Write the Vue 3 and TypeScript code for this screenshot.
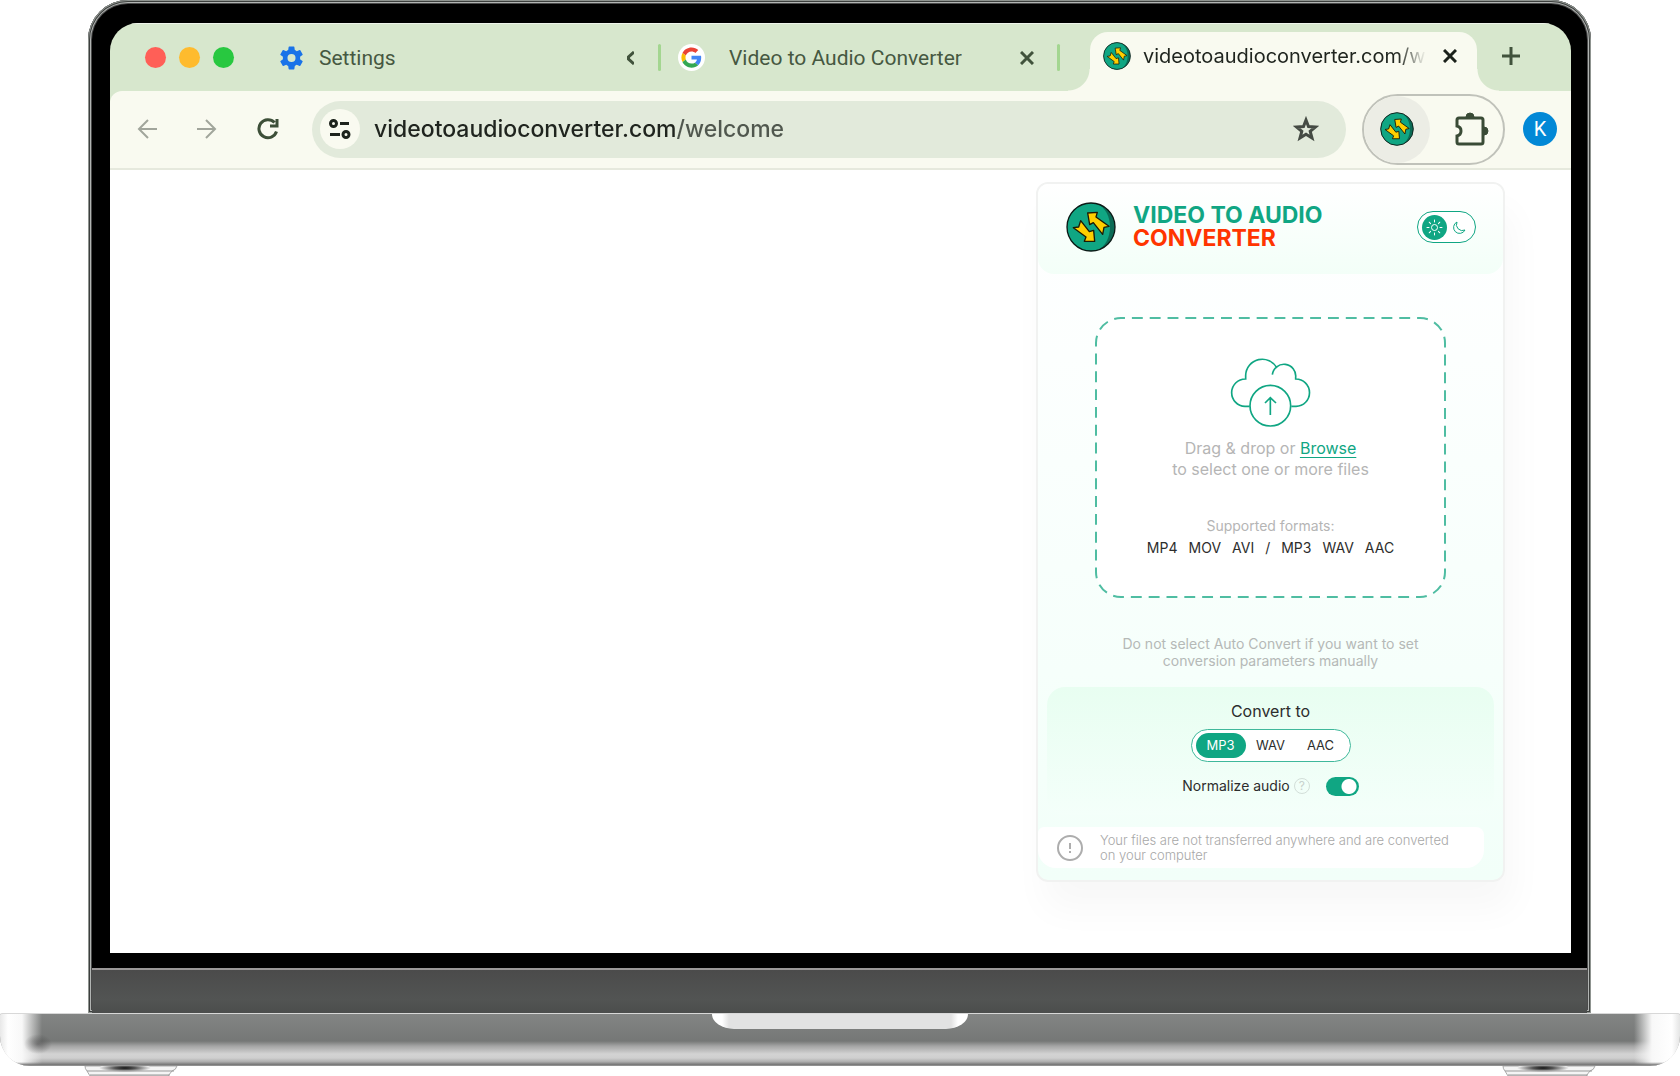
<script setup lang="ts">
import { ref } from 'vue'

type Format = 'MP3' | 'WAV' | 'AAC'

const address = ref('videotoaudioconverter.com/welcome')
const outputs: Format[] = ['MP3', 'WAV', 'AAC']
const output = ref<Format>('MP3')
const normalize = ref(true)
const dark = ref(false)
const supported = ['MP4', 'MOV', 'AVI', '/', 'MP3', 'WAV', 'AAC']
const rays = [0, 45, 90, 135, 180, 225, 270, 315]
</script>

<template>
  <svg class="defs" aria-hidden="true">
    <symbol id="brand" viewBox="5 5 150 150">
      <circle cx="80" cy="80" r="72" fill="#0b6b55" />
      <path d="M98 10A72 72 0 1 0 98 150C150 128 150 32 98 10Z" fill="#10a683" />
      <circle cx="80" cy="80" r="72" fill="none" stroke="#0c1a16" stroke-width="4" />
      <g fill="#ffcf00" stroke="#1c1a05" stroke-width="4" stroke-linejoin="round">
        <path d="M70 38L99 36L95 50L134 78L119 81L115 102L87 67L76 73Z" />
        <path d="M49 61L75 94L88 90L91 123L60 123L65 110L27 82L43 80Z" />
      </g>
    </symbol>
    <radialGradient id="foot" cx=".5" cy=".5" r=".5">
      <stop offset="0" stop-color="#111" />
      <stop offset=".4" stop-color="#555" />
      <stop offset="1" stop-color="#f4f4f4" />
    </radialGradient>
  </svg>

  <main class="laptop">
    <div class="lid">
      <div class="screen">
        <header class="tabs">
          <div class="lights"><i class="red"></i><i class="amber"></i><i class="green"></i></div>
          <div class="tab first">
            <svg width="23" height="24" viewBox="2 2 20 20" fill="#1a73e8"><path d="M19.43 12.98c.04-.32.07-.64.07-.98s-.03-.66-.07-.98l2.11-1.65c.19-.15.24-.42.12-.64l-2-3.46c-.12-.22-.39-.3-.61-.22l-2.49 1c-.52-.4-1.08-.73-1.69-.98l-.38-2.65C14.46 2.18 14.25 2 14 2h-4c-.25 0-.46.18-.49.42l-.38 2.65c-.61.25-1.17.59-1.69.98l-2.49-1c-.23-.09-.49 0-.61.22l-2 3.46c-.13.22-.07.49.12.64l2.11 1.65c-.04.32-.07.65-.07.98s.03.66.07.98l-2.11 1.65c-.19.15-.24.42-.12.64l2 3.46c.12.22.39.3.61.22l2.49-1c.52.4 1.08.73 1.69.98l.38 2.65c.03.24.24.42.49.42h4c.25 0 .46-.18.49-.42l.38-2.65c.61-.25 1.17-.59 1.69-.98l2.49 1c.23.09.49 0 .61-.22l2-3.46c.12-.22.07-.49-.12-.64zM12 15.5A3.5 3.5 0 1 1 12 8.500a3.500 3.500 0 0 1 0 7z" /></svg>
            <span>Settings</span>
            <button class="close" aria-label="Close Settings">
              <svg width="7" height="14" viewBox="0 0 7 14" fill="none" stroke="#41533c" stroke-width="3"><path d="M7 1L1.500 6V8L7 13" /></svg>
            </button>
          </div>
          <i class="divider"></i>
          <div class="tab second">
            <svg width="27" height="27" viewBox="-8 -8 64 64"><circle cx="24" cy="24" r="32" fill="#fff" /><path fill="#ea4335" d="M24 9.500c3.540 0 6.710 1.220 9.210 3.600l6.850-6.850C35.900 2.380 30.470 0 24 0 14.620 0 6.510 5.380 2.560 13.220l7.980 6.190C12.430 13.720 17.740 9.500 24 9.500z" /><path fill="#4285f4" d="M46.980 24.550c0-1.570-.15-3.090-.38-4.550H24v9.020h12.940c-.58 2.960-2.260 5.480-4.780 7.180l7.730 6c4.510-4.180 7.090-10.360 7.090-17.650z" /><path fill="#fbbc05" d="M10.530 28.590c-.48-1.450-.76-2.990-.76-4.590s.27-3.140.76-4.590l-7.980-6.190C.92 16.460 0 20.120 0 24c0 3.880.92 7.540 2.560 10.780l7.970-6.190z" /><path fill="#34a853" d="M24 48c6.480 0 11.930-2.130 15.890-5.810l-7.730-6c-2.150 1.450-4.920 2.300-8.160 2.300-6.260 0-11.570-4.220-13.470-9.910l-7.980 6.190C6.510 42.620 14.620 48 24 48z" /></svg>
            <span>Video to Audio Converter</span>
            <button class="close" aria-label="Close Video to Audio Converter">
              <svg width="14" height="14" viewBox="0 0 14 14" stroke="#41533c" stroke-width="3"><path d="M1 1L13 13M13 1L1 13" /></svg>
            </button>
          </div>
          <i class="divider"></i>
          <div class="tab active">
            <svg width="28" height="28"><use href="#brand" /></svg>
            <span>videotoaudioconverter.com/w</span>
            <button class="close" aria-label="Close current tab">
              <svg width="14" height="14" viewBox="0 0 14 14" stroke="#1b211a" stroke-width="3"><path d="M1 1L13 13M13 1L1 13" /></svg>
            </button>
          </div>
          <button class="new" aria-label="New tab">
            <svg width="18" height="18" viewBox="0 0 18 18" stroke="#41533c" stroke-width="3"><path d="M9 0V18M0 9H18" /></svg>
          </button>
        </header>

        <div class="chrome">
          <nav class="toolbar">
            <button aria-label="Back"><svg width="20" height="20" viewBox="0 0 20 20" fill="none" stroke="#a1a59b" stroke-width="2"><path d="M20 10H2M11 1L2 10L11 19" /></svg></button>
            <button aria-label="Forward"><svg width="20" height="20" viewBox="0 0 20 20" fill="none" stroke="#a1a59b" stroke-width="2"><path d="M0 10H18M9 1L18 10L9 19" /></svg></button>
            <button aria-label="Reload"><svg width="22" height="22" viewBox="0 0 22 22" fill="none" stroke="#3d4f38" stroke-width="3"><path d="M17.500 4.500A9 9 0 1 0 19.500 13.500M13 8H20V1" /></svg></button>
            <div class="omnibox">
              <button class="site" aria-label="Site information">
                <svg width="22" height="20" viewBox="0 0 22 20" fill="none" stroke="#1d231c" stroke-width="3"><circle cx="4.500" cy="4.500" r="3" /><circle cx="17" cy="15.500" r="3" /><path d="M11 4.500H20M1 15.500H11" /></svg>
              </button>
              <input v-model="address" type="text" aria-label="Address" spellcheck="false" />
              <button aria-label="Bookmark"><svg width="26" height="26" viewBox="0 0 26 26" fill="none" stroke="#454b44" stroke-width="3"><path d="M13 4L15.500 10.500L22.500 11L17.200 15.300L19 22L13 18.200L7 22L8.800 15.300L3.500 11L10.500 10.500Z" /></svg></button>
            </div>
            <div class="extensions">
              <button class="ext" aria-label="Video to Audio Converter"><svg width="34" height="34"><use href="#brand" /></svg></button>
              <button class="puzzle" aria-label="Extensions">
                <svg width="34" height="35" viewBox="0 0 34 35"><path d="M4 6H26Q28 6 28 8V30Q28 32 26 32H4Q2 32 2 30V24Q6 23 6 19Q6 15 2 14V8Q2 6 4 6Z" fill="none" stroke="#3a4b36" stroke-width="3" /><path d="M11 5A4 4 0 0 1 19 5ZM29 15A4 4 0 0 1 29 23Z" fill="#3a4b36" stroke="#3a4b36" /></svg>
              </button>
            </div>
            <button class="avatar" aria-label="Profile">K</button>
          </nav>
        </div>

        <section class="page">
          <article class="panel">
            <header class="head">
              <svg class="mark" width="50" height="50"><use href="#brand" /></svg>
              <h1>VIDEO TO AUDIO<br /><em>CONVERTER</em></h1>
              <button class="theme" role="switch" aria-label="Dark theme" :aria-checked="dark" @click="dark = !dark">
                <span class="sun">
                  <svg width="17" height="17" viewBox="0 0 17 17" fill="none" stroke="#fff"><circle cx="8.500" cy="8.500" r="3" /><path v-for="r in rays" :key="r" d="M8.500 3V1" :transform="`rotate(${r} 8.500 8.500)`" stroke-linecap="round" /></svg>
                </span>
                <svg width="13" height="13" viewBox="0 0 13 13" fill="none" stroke="#10a683"><path d="M4 1A6 6 0 1 0 12 9A6 6 0 0 1 4 1Z" stroke-linejoin="round" /></svg>
              </button>
            </header>

            <section class="drop">
              <svg class="outline" aria-hidden="true"><rect width="100%" height="100%" rx="25" pathLength="1224" /></svg>
              <svg width="81" height="71" viewBox="450 171 243 213" fill="none" stroke="#10a683" stroke-width="5">
                <path d="M509 319H495A41 41 0 0 1 497 237V226A50 50 0 0 1 591 204M577 224A35 35 0 0 1 647 232V237A41 41 0 0 1 648 319H634" />
                <circle cx="571" cy="317" r="61" />
                <path d="M571 345V294M555 309L571 293L588 309" />
              </svg>
              <p class="hint">Drag &amp; drop or <a href="#browse">Browse</a><br />to select one or more files</p>
              <p class="label">Supported formats:</p>
              <ul><li v-for="f in supported" :key="f">{{ f }}</li></ul>
            </section>

            <p class="note">Do not select Auto Convert if you want to set<br />conversion parameters manually</p>

            <section class="convert">
              <h2>Convert to</h2>
              <div class="formats" role="radiogroup" aria-label="Output format">
                <label v-for="f in outputs" :key="f" :class="{ on: f === output }">
                  <input v-model="output" type="radio" name="output" :value="f" />{{ f }}
                </label>
              </div>
              <div class="normalize">
                <label for="normalize">Normalize audio</label>
                <button class="help" aria-label="About normalizing">?</button>
                <input id="normalize" v-model="normalize" type="checkbox" />
              </div>
            </section>

            <footer class="notice">
              <svg width="26" height="26" viewBox="0 0 26 26" fill="none" stroke="#adadad" stroke-width="2"><circle cx="13" cy="13" r="12" /><path d="M13 8V14M13 16V18" /></svg>
              <p>Your files are not transferred anywhere and are converted<br />on your computer</p>
            </footer>
          </article>
        </section>
      </div>
      <div class="hinge"></div>
    </div>
    <div class="base"><div class="notch"></div></div>
    <div class="feet">
      <svg v-for="n in 2" :key="n" width="94" height="10" viewBox="0 0 94 10">
        <path d="M1 0H93Q92 4 88 5L84 10H6L3 5Q1 3 1 0Z" fill="#f4f4f4" stroke="#aaa" />
        <ellipse cx="41" cy="2" rx="26" ry="4" fill="url(#foot)" />
        <path d="M3 5H90M6 9H86" stroke="#999" fill="none" />
      </svg>
    </div>
  </main>
</template>

<style>
body {
  margin: 0;
  background: #fff;
}
</style>

<style scoped>
* {
  box-sizing: border-box;
}
button {
  display: flex;
  align-items: center;
  justify-content: center;
  padding: 0;
  border: 0;
  background: none;
  font: inherit;
  color: inherit;
  cursor: pointer;
}
svg {
  flex: none;
  display: block;
}
h1, h2, p, ul {
  margin: 0;
  padding: 0;
}
.defs {
  position: absolute;
  width: 0;
  height: 0;
}
.laptop {
  font-family: Inter, "Liberation Sans", sans-serif;
  overflow: hidden;
}

/* Lid and display */
.lid {
  margin: 0 89px 0 88px;
  padding: 4px;
  padding-bottom: 0;
  border-radius: 40px 40px 0 0;
  background: #000;
  box-shadow: inset 0 0 0 1px #8f9490, inset 0 0 0 2px #3c3f3d, inset 0 0 0 3px #b2b5b3, inset 0 0 0 4px #4a4a4a;
}
.screen {
  margin: 19px 16px 0 18px;
  border-radius: 28px 28px 0 0;
  overflow: hidden;
  background: #d7e7cd;
}
.hinge {
  height: 60px;
  border-top: 15px solid #000;
  background: linear-gradient(#9a9797 2px, #4b4b4b 2px, #525453 70%, #4b4d4c);
}

/* Tab strip */
.tabs {
  display: flex;
  align-items: center;
  height: 68px;
  border-top: 1px solid #eef4ea;
  font-family: Roboto, sans-serif;
  font-size: 21px;
  color: #465841;
}
.lights {
  display: flex;
  gap: 13px;
  padding-left: 35px;
}
.lights i {
  width: 21px;
  height: 21px;
  border-radius: 50%;
}
.red { background: #ff5f57; }
.amber { background: #febb2e; }
.green { background: #28c840; }
.tab {
  display: flex;
  align-items: center;
  min-width: 0;
}
.tab span {
  white-space: nowrap;
  overflow: hidden;
}
.close {
  margin-left: auto;
}
.first {
  flex: 1 1 424px;
  gap: 16px;
  padding: 0 24px 0 46px;
}
.second {
  flex: 1 1 396px;
  gap: 24px;
  padding: 0 23px 0 17px;
}
.divider {
  width: 3px;
  height: 27px;
  border-radius: 2px;
  background: #a3d690;
}
.active {
  position: relative;
  flex: 1 1 387px;
  align-self: flex-end;
  height: 59px;
  margin-left: 30px;
  padding: 0 20px 12px 13px;
  gap: 12px;
  border-radius: 18px 18px 0 0;
  background: #f9faf0;
  font-family: Inter, sans-serif;
  font-size: 20px;
  color: #1f241e;
}
.tab.active span {
  overflow: visible;
  mask-image: linear-gradient(90deg, #000 calc(100% - 28px), transparent);
}
.active::before,
.active::after {
  content: "";
  position: absolute;
  bottom: 0;
  width: 22px;
  height: 22px;
}
.active::before {
  right: 100%;
  background: radial-gradient(circle at 0 0, transparent 21px, #f9faf0 22px);
}
.active::after {
  left: 100%;
  background: radial-gradient(circle at 100% 0, transparent 21px, #f9faf0 22px);
}
.new {
  width: 94px;
  padding: 0 26px 4px 0;
}

/* Toolbar */
.toolbar {
  display: flex;
  align-items: center;
  height: 79px;
  padding: 0 14px 1px 27px;
  gap: 40px;
  border-bottom: 2px solid #e6e9dd;
  border-radius: 12px 0 0 0;
  background: #f9faf0;
}
.omnibox {
  display: flex;
  flex: 1;
  align-items: center;
  min-width: 0;
  height: 57px;
  margin-left: -7px;
  padding: 0 27px 0 8px;
  border-radius: 29px;
  background: #e2eadb;
}
.site {
  flex: none;
  width: 40px;
  height: 40px;
  border-radius: 50%;
  background: #f9faf0;
}
.omnibox input {
  flex: 1;
  min-width: 0;
  margin-left: 14px;
  padding: 0;
  border: 0;
  outline: 0;
  font: 500 23px/32px Inter, sans-serif;
  color: #1f241e;
  background: linear-gradient(90deg, #1f241e 303px, #50574e 303px);
  background-clip: text;
  -webkit-text-fill-color: transparent;
}
.extensions {
  display: flex;
  align-items: center;
  justify-content: space-between;
  width: 143px;
  height: 71px;
  margin-left: -24px;
  padding-right: 14px;
  border: 2px solid #c0c2ba;
  border-radius: 36px;
  overflow: hidden;
}
.ext {
  width: 66px;
  height: 67px;
  border-radius: 50%;
  background: #ecede5;
}
.avatar {
  width: 34px;
  height: 34px;
  margin-left: -22px;
  border-radius: 50%;
  background: #0288d6;
  font-family: Roboto, sans-serif;
  font-size: 20px;
  color: #fff;
}

/* Page and extension popup */
.page {
  display: flex;
  justify-content: flex-end;
  align-items: flex-start;
  min-height: 783px;
  padding: 12px 66px 0 0;
  background: #fff;
}
.panel {
  width: 469px;
  padding-bottom: 12px;
  border: 2px solid #f1f2f1;
  border-radius: 12px;
  background: linear-gradient(#fff, #fcfffe 25%, #f2fff9);
  box-shadow: 8px 28px 36px rgba(0, 0, 0, 0.03);
  overflow: clip;
}
.head {
  display: flex;
  align-items: center;
  height: 90px;
  padding: 0 27px 4px 28px;
  border-radius: 0 0 16px 16px;
  background: linear-gradient(#fff, #f3fff8);
}
h1 {
  margin-left: 17px;
  font-size: 23px;
  line-height: 23px;
  color: #10a683;
}
h1 em {
  font-style: normal;
  color: #ff3500;
}
.theme {
  width: 59px;
  height: 32px;
  margin-left: auto;
  padding: 0 9px 0 4px;
  justify-content: space-between;
  border: 1px solid #10a683;
  border-radius: 16px;
  background: #fff;
}
.sun {
  display: grid;
  place-items: center;
  width: 25px;
  height: 25px;
  border-radius: 50%;
  background: #10a683;
}
.drop {
  position: relative;
  display: flex;
  flex-direction: column;
  align-items: center;
  height: 279px;
  margin: 44px 58px 0;
  padding-top: 39px;
  border-radius: 25px;
  background: #fff;
  text-align: center;
}
.outline {
  position: absolute;
  inset: 0;
  width: 100%;
  height: 100%;
  overflow: visible;
}
.outline rect {
  fill: none;
  stroke: #4fbda2;
  stroke-width: 2;
  stroke-dasharray: 11 7;
  stroke-dashoffset: 7;
}
.hint {
  position: relative;
  margin-top: 10px;
  font-size: 16px;
  line-height: 21px;
  color: #b5b5b5;
}
.hint a {
  color: #10a683;
  text-underline-offset: 3px;
}
.label {
  margin-top: 35px;
  font-size: 14px;
  line-height: 21px;
  color: #b5b5b5;
}
ul {
  display: flex;
  gap: 11px;
  list-style: none;
  font-size: 14px;
  line-height: 23px;
  color: #2d2d2d;
}
.note {
  margin-top: 38px;
  font-size: 14px;
  line-height: 17px;
  text-align: center;
  color: #b5b9b7;
}
.convert {
  display: flex;
  flex-direction: column;
  align-items: center;
  height: 128px;
  margin: 18px 9px 0;
  padding-top: 14px;
  border-radius: 18px;
  background: linear-gradient(#e8fef1, #f4fffa);
  color: #2d2d2d;
}
h2 {
  font-size: 16px;
  line-height: 20px;
  font-weight: 400;
}
.formats {
  display: flex;
  height: 33px;
  margin-top: 8px;
  padding: 3px 4px;
  border: 1px solid #3fb89b;
  border-radius: 17px;
  background: #fff;
}
.formats label {
  width: 50px;
  border-radius: 13px;
  font-size: 13px;
  line-height: 25px;
  text-align: center;
}
.formats .on {
  background: #10a683;
  color: #fff;
}
.formats input {
  position: absolute;
  opacity: 0;
  margin: 0;
}
.normalize {
  display: flex;
  align-items: center;
  margin-top: 14px;
  font-size: 14px;
  line-height: 20px;
}
.help {
  width: 16px;
  height: 16px;
  margin: 0 16px 0 4px;
  border: 1px solid #d3dfd9;
  border-radius: 50%;
  font-size: 12px;
  line-height: 14px;
  color: #c8d2cd;
}
.normalize input {
  appearance: none;
  width: 33px;
  height: 19px;
  margin: 0;
  border-radius: 10px;
  background: radial-gradient(circle at 23px 50%, #fff 7px, #10a683 8px);
}
.notice {
  display: flex;
  align-items: center;
  height: 41px;
  margin: 12px 19px 0 0;
  padding-left: 19px;
  gap: 17px;
  border-radius: 6px 8px 18px 18px;
  background: #fff;
  font-size: 13px;
  font-weight: 300;
  line-height: 15px;
  color: #a8a8a8;
}

/* Laptop base */
.base {
  display: flex;
  justify-content: center;
  height: 53px;
  border-radius: 2px 2px 30px 30px;
  border-top: 1px solid #d8d8d8;
  background:
    radial-gradient(ellipse 14px 10px at 38px 30px, rgba(60, 60, 60, 0.5), transparent),
    linear-gradient(transparent 48px, #777 51px, #aaa),
    linear-gradient(90deg, #e8e8e8, #fff 8px, #f8f8f8 22px, transparent 42px, transparent calc(100% - 46px), #f8f8f8 calc(100% - 28px), #fff calc(100% - 8px), #e4e4e4),
    linear-gradient(#838584, #757776 27px, #a4a4a4 32px, #d3d3d3 40px, #cfcfcf 44px, #999 50px, #666);
}
.notch {
  width: 256px;
  height: 15px;
  border-radius: 0 0 22px 22px / 0 0 15px 15px;
  background: linear-gradient(90deg, #fff 10px, #e2e2e2 17px, #e2e2e2 calc(100% - 17px), #fff calc(100% - 10px));
}
.feet {
  display: flex;
  justify-content: space-between;
  padding: 0 84px;
}
</style>
